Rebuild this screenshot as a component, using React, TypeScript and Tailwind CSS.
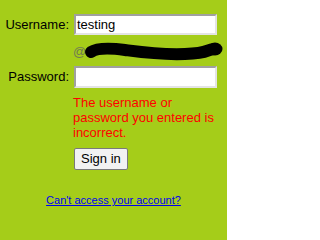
export default function App() {
  return (
    <div className="min-h-screen w-[227px] h-[216px] bg-[#a5cd19] font-['Liberation_Sans',Arial,sans-serif] text-[13px] text-black pt-[14px]">
      <div className="grid grid-cols-[70px_143px] gap-x-[4px]">
        {/* Username */}
        <label className="text-right leading-[21px] pr-px">Username:</label>
        <div className="h-[21px] border-2 border-t-[#a0a0a0] border-l-[#a0a0a0] border-b-[#e4e4e4] border-r-[#e4e4e4] bg-white px-[1px] leading-[17px]">
          testing
        </div>

        <div />
        <div className="relative h-[31px] text-[#6f7b52]">
          <span className="absolute -left-px top-[9px] leading-[15px]">@</span>
          <svg className="absolute left-0 top-0" width="150" height="31" viewBox="74 35 150 31">
            <path
              d="M91 52 C 97 48, 110 48, 125 50 S 160 55, 185 54 S 205 50, 214 49"
              fill="none"
              stroke="#000"
              strokeWidth="12"
              strokeLinecap="round"
            />
            <ellipse cx="215" cy="49" rx="7.5" ry="6.5" fill="#000" />
          </svg>
        </div>

        {/* Password */}
        <label className="text-right leading-[22px] pr-px">Password:</label>
        <div className="h-[22px] border-2 border-t-[#a0a0a0] border-l-[#a0a0a0] border-b-[#e4e4e4] border-r-[#e4e4e4] bg-white" />

        <div />
        <p className="text-[#ff0000] leading-[15px] mt-[7px] -ml-px">
          The username or password you entered is incorrect.
        </p>

        <div />
        <div className="mt-[8px]">
          <button className="h-[22px] px-[6px] rounded-[2px] border border-[#7a7a7a] bg-[#f2f2f2] text-[13px] leading-[18px] text-black">
            Sign in
          </button>
        </div>
      </div>

      <div className="mt-[20px] text-center">
        <a href="#" className="text-[11px] text-[#0000ee] underline leading-[14px]">
          Can't access your account?
        </a>
      </div>
    </div>
  );
}
